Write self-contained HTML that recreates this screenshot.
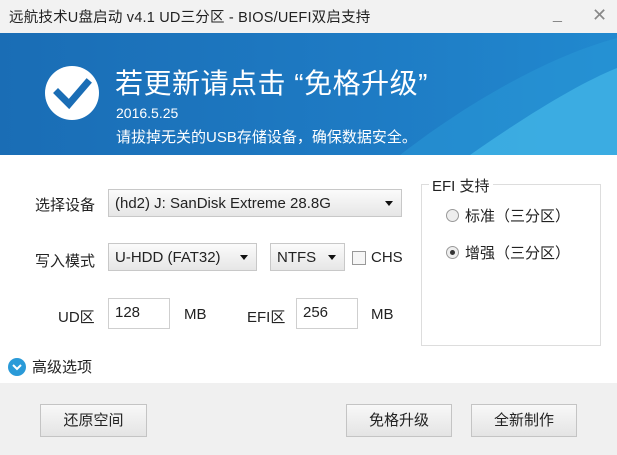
<!DOCTYPE html>
<html><head><meta charset="utf-8"><style>
*{margin:0;padding:0;box-sizing:border-box}
body{width:617px;height:455px;overflow:hidden;background:#fff;font-family:"Liberation Sans","Noto Sans CJK SC",sans-serif;font-size:15px;color:#222;position:relative}
.a{position:absolute;white-space:nowrap}
.title{left:0;top:0;width:617px;height:33px;background:#f2f2f2}
.banner{left:0;top:33px;width:617px;height:122px;background:linear-gradient(90deg,#1a6db5 0%,#1e7bc4 60%,#2189cf 100%);overflow:hidden}
.sel{background:linear-gradient(#fbfbfb,#e6e6e6);border:1px solid #c8c8c8;height:28px;line-height:28px;padding-left:6px;font-size:15px}
.sel:after{content:"";position:absolute;right:8px;top:11px;border:4px solid transparent;border-top:5px solid #111}
.inp{border:1px solid #cfcfcf;height:31px;padding:5px 6px;font-size:15px;background:#fff}
.btn{background:linear-gradient(#f8f8f8,#e4e4e4);border:1px solid #c4c4c4;height:33px;line-height:31px;text-align:center;font-size:15px}
</style></head><body>
<div class="a title"></div>
<div class="a" style="left:9px;top:6px;font-size:14.5px;color:#222;letter-spacing:.2px">远航技术U盘启动 v4.1 UD三分区 - BIOS/UEFI双启支持</div>
<div class="a" style="left:553px;top:6px;font-size:16px;color:#888">_</div>
<div class="a" style="left:592px;top:5px;font-size:18px;color:#888">✕</div>
<div class="a banner">
<svg width="617" height="122" style="position:absolute;left:0;top:0">
<path d="M400 122 C480 60 560 20 617 5 L617 122 Z" fill="#2a9ad8" opacity=".5"/>
<path d="M470 122 C530 80 580 50 617 35 L617 122 Z" fill="#45b8e8" opacity=".7"/>
<circle cx="72" cy="60" r="27" fill="#fff"/>
<path d="M58 60 L69 71 L87 50" stroke="#1a6db5" stroke-width="7" fill="none" stroke-linecap="square"/>
</svg>
</div>
<div class="a" style="left:115px;top:62px;font-size:28px;color:#fff;letter-spacing:.5px">若更新请点击 “免格升级”</div>
<div class="a" style="left:116px;top:105px;font-size:14px;color:#fff">2016.5.25</div>
<div class="a" style="left:116px;top:126px;font-size:15px;color:#fff">请拔掉无关的USB存储设备，确保数据安全。</div>

<div class="a" style="left:35px;top:194px">选择设备</div>
<div class="a sel" style="left:108px;top:189px;width:294px">(hd2) J: SanDisk Extreme 28.8G</div>
<div class="a" style="left:35px;top:250px">写入模式</div>
<div class="a sel" style="left:108px;top:243px;width:149px">U-HDD (FAT32)</div>
<div class="a sel" style="left:270px;top:243px;width:75px">NTFS</div>
<div class="a" style="left:352px;top:251px;width:14px;height:14px;border:1px solid #999;background:#f6f6f6"></div>
<div class="a" style="left:371px;top:249px">CHS</div>
<div class="a" style="left:58px;top:306px">UD区</div>
<div class="a inp" style="left:108px;top:298px;width:62px">128</div>
<div class="a" style="left:184px;top:306px">MB</div>
<div class="a" style="left:247px;top:306px">EFI区</div>
<div class="a inp" style="left:296px;top:298px;width:62px">256</div>
<div class="a" style="left:371px;top:306px">MB</div>

<div class="a" style="left:421px;top:184px;width:180px;height:162px;border:1px solid #ddd"></div>
<div class="a" style="left:429px;top:175px;background:#fff;padding:0 3px">EFI 支持</div>
<div class="a" style="left:446px;top:209px;width:13px;height:13px;border-radius:50%;border:1px solid #999;background:#eee"></div>
<div class="a" style="left:465px;top:205px">标准（三分区）</div>
<div class="a" style="left:446px;top:246px;width:13px;height:13px;border-radius:50%;border:1px solid #999;background:#eee"></div>
<div class="a" style="left:450px;top:250px;width:5px;height:5px;border-radius:50%;background:#333"></div>
<div class="a" style="left:465px;top:242px">增强（三分区）</div>

<div class="a" style="left:8px;top:358px;width:18px;height:18px;border-radius:50%;background:#2a9ad8"></div>
<svg class="a" style="left:8px;top:358px" width="18" height="18"><path d="M5 7 L9 11 L13 7" stroke="#fff" stroke-width="2" fill="none"/></svg>
<div class="a" style="left:32px;top:356px">高级选项</div>

<div class="a" style="left:0;top:383px;width:617px;height:72px;background:#f0f0f0"></div>
<div class="a btn" style="left:40px;top:404px;width:107px">还原空间</div>
<div class="a btn" style="left:346px;top:404px;width:106px">免格升级</div>
<div class="a btn" style="left:471px;top:404px;width:106px">全新制作</div>
</body></html>
